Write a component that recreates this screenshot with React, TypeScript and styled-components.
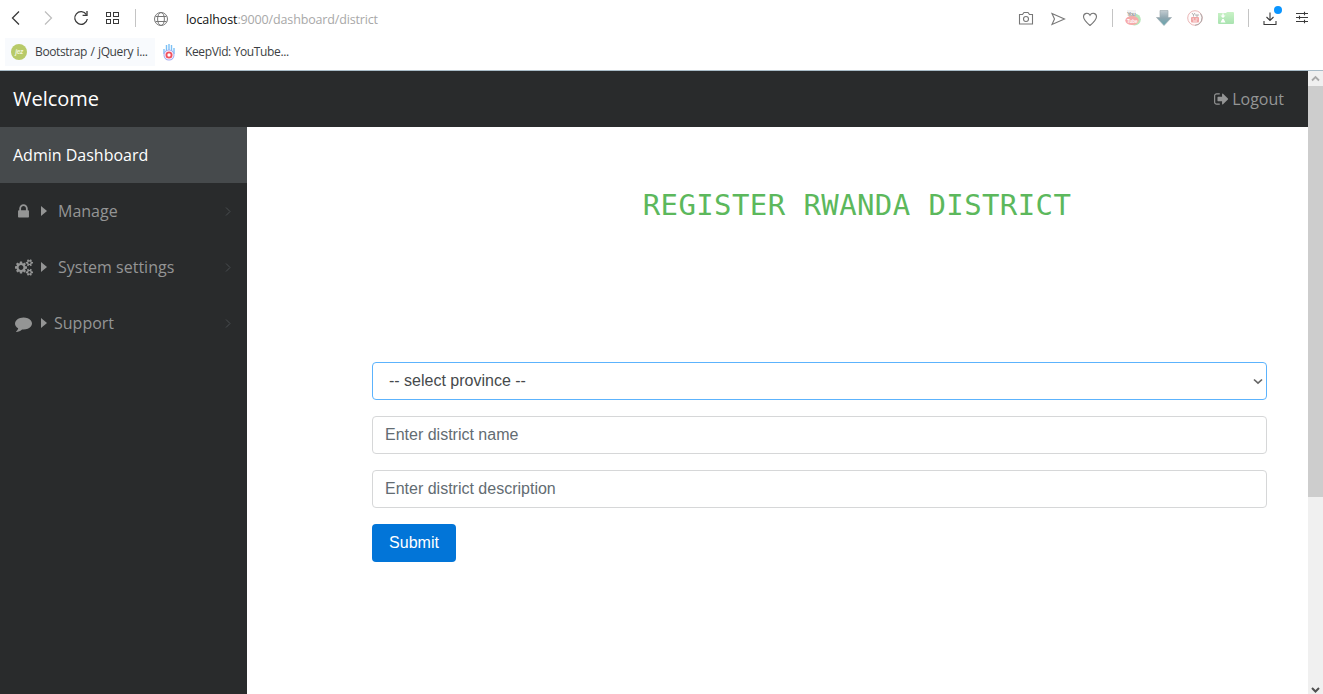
import React from "react";
import styled, { createGlobalStyle } from "styled-components";

const GlobalStyle = createGlobalStyle`
  * { box-sizing: border-box; }
  body { margin: 0; overflow: hidden; background: #fff; }
`;

const Window = styled.div`
  width: 1323px;
  height: 694px;
  display: flex;
  flex-direction: column;
  overflow: hidden;
  font-family: "Open Sans", "Noto Sans", sans-serif;
`;

const Chrome = styled.header`
  height: 71px;
  flex: none;
  background: #fff;
  border-bottom: 1px solid #a9bcc8;
`;

const AddressRow = styled.div`
  height: 38px;
  display: flex;
  align-items: flex-start;
  padding-left: 8px;
  padding-right: 4px;
`;

const Slot = styled.span<{ $w: number }>`
  width: ${(p) => p.$w}px;
  height: 36px;
  flex: none;
  display: flex;
  align-items: center;
  justify-content: center;
  position: relative;
  svg { display: block; }
`;

const Divider = styled.span`
  width: 1px;
  height: 18px;
  flex: none;
  background: #c4c4c4;
`;

const Url = styled.div`
  flex: 1;
  margin-left: 16px;
  font-size: 12.5px;
  line-height: 18px;
  letter-spacing: -0.15px;
  color: #a8a8a8;
  padding-top: 11px;
  b { font-weight: 400; color: #111; letter-spacing: -0.1px; }
`;

const Dot = styled.i`
  position: absolute;
  width: 8px;
  height: 8px;
  border-radius: 50%;
  background: #0a95ff;
  top: 6px;
  left: 20px;
`;

const Bookmarks = styled.div`
  display: flex;
  height: 28px;
  padding-left: 5px;
`;

const Bookmark = styled.div<{ $w: number; $tint?: boolean }>`
  width: ${(p) => p.$w}px;
  display: flex;
  align-items: center;
  gap: 8px;
  padding-left: 6px;
  background: ${(p) => (p.$tint ? "#f8fafd" : "transparent")};
  color: #3c3f44;
  font-size: 12px;
  line-height: 16px;
  letter-spacing: -0.37px;
  word-spacing: ${(p) => (p.$tint ? 0.7 : 0)}px;
  white-space: nowrap;
`;

const BookmarkText = styled.span`
  padding-bottom: 1px;
`;

const Page = styled.div`
  flex: 1;
  display: flex;
  min-height: 0;
`;

const Site = styled.div`
  flex: 1;
  display: flex;
  flex-direction: column;
`;

const Navbar = styled.nav`
  height: 56px;
  flex: none;
  background: #292b2c;
  display: flex;
  align-items: center;
  justify-content: space-between;
  padding: 0 24px 0 13px;
`;

const Brand = styled.div`
  font-size: 20px;
  color: #fff;
  padding-bottom: 2px;
`;

const Logout = styled.div`
  display: flex;
  align-items: center;
  gap: 3px;
  font-size: 16px;
  color: #949595;
`;

const Body = styled.div`
  flex: 1;
  display: flex;
`;

const Sidebar = styled.aside`
  width: 247px;
  flex: none;
  background: #292b2c;
`;

const SideItem = styled.div<{ $active?: boolean }>`
  height: 56px;
  display: flex;
  align-items: center;
  padding: 0 15px 0 13px;
  font-size: 16px;
  color: ${(p) => (p.$active ? "#fff" : "#949595")};
  background: ${(p) => (p.$active ? "#464a4c" : "transparent")};
`;

const IconBox = styled.span`
  width: 21px;
  display: flex;
  justify-content: center;
`;

const Caret = styled.span`
  margin-left: 7px;
  border-left: 6px solid #949595;
  border-top: 5px solid transparent;
  border-bottom: 5px solid transparent;
`;

const SideLabel = styled.span<{ $gap: number }>`
  margin-left: ${(p) => p.$gap}px;
  flex: 1;
`;

const Main = styled.main`
  flex: 1;
  padding: 57px 41px 0 125px;
`;

const Title = styled.h2`
  margin: 0 0 135px;
  height: 43px;
  padding-left: 75px;
  text-align: center;
  font: 400 29px/43px "DejaVu Sans Mono", monospace;
  letter-spacing: 0.4px;
  color: #5cb85c;
  white-space: nowrap;
`;

const Form = styled.div`
  display: flex;
  flex-direction: column;
  align-items: flex-start;
  gap: 16px;
  font: 16px/24px "Liberation Sans", Arial, sans-serif;
`;

const Field = styled.div<{ $focus?: boolean }>`
  width: 100%;
  height: 38px;
  display: flex;
  align-items: center;
  justify-content: space-between;
  border: 1px solid ${(p) => (p.$focus ? "#5cb3fd" : "#d6d7d8")};
  border-radius: 4px;
  padding: 0 3px 0 ${(p) => (p.$focus ? 16 : 12)}px;
  color: ${(p) => (p.$focus ? "#464a4c" : "#636c72")};
`;

const Submit = styled.button`
  width: 84px;
  height: 38px;
  border: 0;
  border-radius: 4px;
  background: #0275d8;
  color: #fff;
  font: inherit;
  padding: 0 0 1px;
`;

const Scrollbar = styled.div`
  width: 15px;
  flex: none;
  background: #f0f0f0;
  display: flex;
  flex-direction: column;
`;

const ScrollButton = styled.div<{ $low?: boolean }>`
  height: 15px;
  display: flex;
  align-items: center;
  justify-content: center;
  padding-top: ${(p) => (p.$low ? 5 : 0)}px;
`;

const Thumb = styled.div`
  height: 411px;
  background: #cdcdcd;
  margin-bottom: auto;
`;

type LineProps = { w?: number; h?: number; color?: string; sw?: number; children: React.ReactNode };
const Line = ({ w = 16, h = 16, color = "#3a3a3a", sw = 1.2, children }: LineProps) => (
  <svg width={w} height={h} viewBox={`0 0 ${w} ${h}`} fill="none" stroke={color} strokeWidth={sw}>
    {children}
  </svg>
);

const Lock = () => (
  <svg width="11" height="17" viewBox="0 0 1152 1792" fill="currentColor">
    <path d="M320 768h512v-192q0-106-75-181t-181-75-181 75-75 181v192zm832 96v576q0 40-28 68t-68 28h-960q-40 0-68-28t-28-68v-576q0-40 28-68t68-28h32v-192q0-184 132-316t316-132 316 132 132 316v192h32q40 0 68 28t28 68z" />
  </svg>
);

const Cogs = () => (
  <svg width="18" height="17" viewBox="0 0 1920 1792" fill="currentColor">
    <path d="M896 896q0-106-75-181t-181-75-181 75-75 181 75 181 181 75 181-75 75-181zm768 512q0-52-38-90t-90-38-90 38-38 90q0 53 37.500 90.500t90.500 37.500 90.500-37.500 37.500-90.500zm0-1024q0-52-38-90t-90-38-90 38-38 90q0 53 37.500 90.500t90.500 37.500 90.500-37.500 37.500-90.500zm-384 421v185q0 10-7 19.500t-16 10.500l-155 24q-11 35-32 76 34 48 90 115 7 11 7 20 0 12-7 19-23 30-82.500 89.500t-78.500 59.500q-11 0-21-7l-115-90q-37 19-77 31-11 108-23 155-7 24-30 24h-186q-11 0-20-7.500t-10-17.500l-23-153q-34-10-75-31l-118 89q-7 7-20 7-11 0-21-8-144-133-144-160 0-9 7-19 10-14 41-53t47-61q-23-44-35-82l-152-24q-10-1-17-9.500t-7-19.500v-185q0-10 7-19.500t16-10.500l155-24q11-35 32-76-34-48-90-115-7-11-7-20 0-12 7-20 22-30 82-89t79-59q11 0 21 7l115 90q34-18 77-32 11-108 23-154 7-24 30-24h186q11 0 20 7.500t10 17.500l23 153q34 10 75 31l118-89q8-7 20-7 11 0 21 8 144 133 144 160 0 8-7 19-12 16-42 54t-45 60q23 48 34 82l152 23q10 2 17 10.500t7 19.500zm640 533v140q0 16-149 31-12 27-30 52 51 113 51 138 0 4-4 7-122 71-124 71-8 0-46-47t-52-68q-20 2-30 2t-30-2q-14 21-52 68t-46 47q-2 0-124-71-4-3-4-7 0-25 51-138-18-25-30-52-149-15-149-31v-140q0-16 149-31 13-29 30-52-51-113-51-138 0-4 4-7 4-2 35-20t59-34 30-16q8 0 46 46.500t52 67.500q20-2 30-2t30 2q51-71 92-112l6-2q4 0 124 70 4 3 4 7 0 25-51 138 17 23 30 52 149 15 149 31zm0-1024v140q0 16-149 31-12 27-30 52 51 113 51 138 0 4-4 7-122 71-124 71-8 0-46-47t-52-68q-20 2-30 2t-30-2q-14 21-52 68t-46 47q-2 0-124-71-4-3-4-7 0-25 51-138-18-25-30-52-149-15-149-31v-140q0-16 149-31 13-29 30-52-51-113-51-138 0-4 4-7 4-2 35-20t59-34 30-16q8 0 46 46.500t52 67.500q20-2 30-2t30 2q51-71 92-112l6-2q4 0 124 70 4 3 4 7 0 25-51 138 17 23 30 52 149 15 149 31z" />
  </svg>
);

const Comment = () => (
  <svg width="17" height="17" viewBox="0 0 1792 1792" fill="currentColor">
    <path d="M1792 896q0 174-120 321.5t-326 233-450 85.5q-70 0-145-8-198 175-460 242-49 14-114 22-17 2-30.5-9t-17.5-29v-1q-3-4-.5-12t2-10 4.5-9.5l6-9 7-8.5 8-9q7-8 31-34.5t34.5-38 31-39.5 32.5-51 27-59 26-76q-157-89-247.5-220t-90.5-281q0-130 71-248.5t191-204.5 286-136.5 348-50.5q244 0 450 85.5t326 233 120 321.5z" />
  </svg>
);

const SignOut = () => (
  <svg width="15" height="16" viewBox="0 0 1664 1792" fill="currentColor">
    <path d="M640 1440q0 4 1 20t.5 26.5-3 23.5-10 19.5-20.5 6.5h-320q-119 0-203.5-84.5t-84.5-203.5v-704q0-119 84.5-203.5t203.5-84.5h320q13 0 22.5 9.5t9.5 22.5q0 4 1 20t.5 26.5-3 23.5-10 19.5-20.5 6.5h-320q-66 0-113 47t-47 113v704q0 66 47 113t113 47h312l11.5 1 11.5 3 8 5.5 7 9 2 13.5zm928-544q0 26-19 45l-544 544q-19 19-45 19t-45-19-19-45v-288h-448q-26 0-45-19t-19-45v-384q0-26 19-45t45-19h448v-288q0-26 19-45t45-19 45 19l544 544q19 19 19 45z" />
  </svg>
);

const TinyText = styled.text`
  font-family: "Liberation Sans", sans-serif;
  font-weight: 700;
`;

const items = [
  { label: "Manage", icon: <Lock />, gap: 11 },
  { label: "System settings", icon: <Cogs />, gap: 11 },
  { label: "Support", icon: <Comment />, gap: 7 },
];

export default function App() {
  return (
    <Window>
      <GlobalStyle />
      <Chrome>
        <AddressRow>
          <Slot $w={16}><Line sw={1.3}><path d="M11 1.500 4.500 8l6.500 6.500" /></Line></Slot>
          <Slot $w={48}><Line color="#bdbdbd"><path d="M5 1.500 11.500 8 5 14.500" /></Line></Slot>
          <Slot $w={17}><Line sw={1.3}><path d="M13.4 4.600A6.300 6.300 0 1 0 14.300 9" /><path d="M14 1v4.300H9.600" /></Line></Slot>
          <Slot $w={46}><Line sw={1}><rect x="2.500" y="2.500" width="4" height="4" /><rect x="9.500" y="2.500" width="5" height="4" /><rect x="2.500" y="9.500" width="4" height="4" /><rect x="9.500" y="9.500" width="5" height="4" /></Line></Slot>
          <Slot $w={1}><Divider /></Slot>
          <Slot $w={16} />
          <Slot $w={18}>
            <Line color="#777" sw={1}><circle cx="8" cy="9" r="6.500" /><ellipse cx="8" cy="9" rx="3.400" ry="6.500" /><path d="M2.500 6.500h11M2.500 11.500h11" /></Line>
          </Slot>
          <Url><b>localhost</b>:9000/dashboard/district</Url>
          <Slot $w={32}><Line color="#777" sw={1.1}><path d="M1.500 4.500h3l1.500-2h4l1.500 2h3v9.500h-13z" /><circle cx="8" cy="9" r="2.500" /></Line></Slot>
          <Slot $w={32}><Line color="#777" sw={1.1}><path d="M2 3.500l12.500 5.500L2 14.500l2.500-5.500z" /></Line></Slot>
          <Slot $w={32}><Line color="#777" sw={1.1}><path d="M8 15.500C4 12 1.500 9.700 1.500 6.700 1.500 2.800 6.400 2.100 8 5.300c1.600-3.200 6.500-2.500 6.500 1.400 0 3-2.500 5.300-6.500 8.800z" /></Line></Slot>
          <Slot $w={13}><Divider /></Slot>
          <Slot $w={28}>
            <svg width="16" height="16" viewBox="0 0 16 16">
              <ellipse cx="9.500" cy="9.500" rx="6.300" ry="6" fill="#b8e6bb" />
              <path d="M2 0h9v6H2z" fill="#f3f3f3" />
              <ellipse cx="7" cy="10.500" rx="6.700" ry="4.500" fill="#f6aaaa" />
              <TinyText x="2" y="5.500" fontSize="6" fill="#999" textLength="9">You</TinyText>
              <TinyText x="2" y="12.500" fontSize="6" fill="#fff" textLength="10.500" lengthAdjust="spacingAndGlyphs">Tube</TinyText>
            </svg>
          </Slot>
          <Slot $w={33}>
            <svg width="16" height="16" viewBox="0 0 16 16">
              <defs><linearGradient id="arrow" x2="0" y2="1"><stop stopColor="#c3ccd1" /><stop offset=".5" stopColor="#8fa6b0" /><stop offset="1" stopColor="#65a6ae" /></linearGradient></defs>
              <path d="M4 .5h8v7h3.500L8 15.500.5 7.500H4z" fill="url(#arrow)" stroke="#a0adb3" strokeWidth=".7" />
            </svg>
          </Slot>
          <Slot $w={29}>
            <svg width="16" height="16" viewBox="0 0 16 16">
              <circle cx="8" cy="8" r="7.300" fill="#fffafa" stroke="#eab8b8" />
              <path d="M13.500 3.500A7.300 7.300 0 0 1 8 15.300" fill="none" stroke="#aaa" />
              <path d="M5 3l1.500 2v1.500M8 3L6.500 5M9 4v2h2V4" fill="none" stroke="#aaa" strokeWidth=".9" />
              <rect x="4" y="7" width="8" height="5.500" rx="1" fill="#f0a5a5" />
              <path d="M5.500 9h1.500m1.500 0h2m-4.500 2h4" stroke="#fff" strokeWidth=".8" />
            </svg>
          </Slot>
          <Slot $w={33}>
            <svg width="16" height="16" viewBox="0 0 16 16">
              <defs><linearGradient id="folder" x2="0" y2="1"><stop stopColor="#c9f2c6" /><stop offset="1" stopColor="#a9e3b0" /></linearGradient></defs>
              <path d="M0 3h8l1-1h6q1 0 1 1v10q0 1-1 1H1q-1 0-1-1z" fill="url(#folder)" />
              <path d="M4.300 3.500h1.400v2h1.800L5 8 2.500 5.500h1.800zM4.300 9h1.400l1.800 3.500h-5z" fill="#fff" />
            </svg>
          </Slot>
          <Slot $w={12}><Divider /></Slot>
          <Slot $w={31}>
            <Line sw={1.1}><path d="M8 2.500v8M4.500 7 8 10.500 11.500 7M2 11v3.500h12V11" /></Line>
            <Dot />
          </Slot>
          <Slot $w={34}><Line w={14} sw={1.1}><path d="M1 3.500h12M1 7.500h12M1 11.500h12M9.500 1.800v3.400M4.500 5.800v3.400M9.500 9.800v3.400" /></Line></Slot>
        </AddressRow>
        <Bookmarks>
          <Bookmark $w={150} $tint>
            <svg width="16" height="16" viewBox="0 0 16 16">
              <circle cx="8" cy="8" r="8" fill="#b8ca69" />
              <TinyText x="8" y="10" textAnchor="middle" fontSize="6.500" fontStyle="italic" fill="#f2f6dc">jez</TinyText>
            </svg>
            <BookmarkText>Bootstrap / jQuery i...</BookmarkText>
          </Bookmark>
          <Bookmark $w={140}>
            <svg width="16" height="18" viewBox="0 0 16 18">
              <path d="M3 6v5M5.500 2v8M8 1v8M10.500 2v8M13 5v6" stroke="#7cc0f5" strokeWidth="1.400" />
              <circle cx="8" cy="12" r="5.500" fill="#a3a8f0" />
              <circle cx="8" cy="12" r="3.500" fill="#fff" stroke="#fff" strokeWidth="2" />
              <circle cx="8" cy="12" r="2.600" fill="#fff" stroke="#f0505f" strokeWidth="1.900" />
            </svg>
            <BookmarkText>KeepVid: YouTube...</BookmarkText>
          </Bookmark>
        </Bookmarks>
      </Chrome>
      <Page>
        <Site>
          <Navbar>
            <Brand>Welcome</Brand>
            <Logout><SignOut />Logout</Logout>
          </Navbar>
          <Body>
            <Sidebar>
              <SideItem $active>Admin Dashboard</SideItem>
              {items.map((item) => (
                <SideItem key={item.label}>
                  <IconBox>{item.icon}</IconBox>
                  <Caret />
                  <SideLabel $gap={item.gap}>{item.label}</SideLabel>
                  <Line w={8} h={10} color="#4a4e50" sw={1}><path d="M2 1.500l4 4-4 4" /></Line>
                </SideItem>
              ))}
            </Sidebar>
            <Main>
              <Title>REGISTER RWANDA DISTRICT</Title>
              <Form>
                <Field $focus>
                  -- select province --
                  <Line w={10} h={8} color="#666" sw={1.7}><path d="M1 2.500l4 3.700 4-3.700" /></Line>
                </Field>
                <Field>Enter district name</Field>
                <Field>Enter district description</Field>
                <Submit>Submit</Submit>
              </Form>
            </Main>
          </Body>
        </Site>
        <Scrollbar>
          <ScrollButton><Line w={9} h={7} color="#a9a9a9" sw={1.8}><path d="M1 5.500 4.500 2 8 5.500" /></Line></ScrollButton>
          <Thumb />
          <ScrollButton $low><Line w={9} h={7} color="#505050" sw={2}><path d="M1 2l3.500 3.500L8 2" /></Line></ScrollButton>
        </Scrollbar>
      </Page>
    </Window>
  );
}
